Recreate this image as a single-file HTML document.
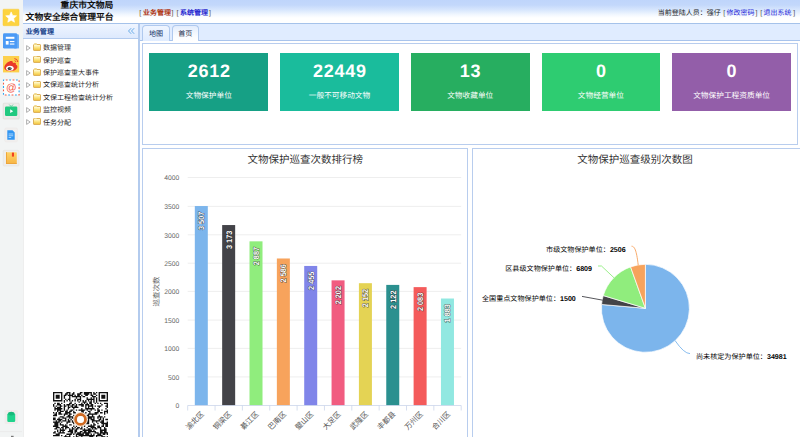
<!DOCTYPE html>
<html lang="zh-CN"><head><meta charset="utf-8">
<style>
*{margin:0;padding:0;box-sizing:border-box;text-rendering:geometricPrecision}
html,body{width:800px;height:437px;overflow:hidden;background:#fff;font-family:"Liberation Sans",sans-serif;position:relative}
.abs{position:absolute}
#strip{left:0;top:0;width:24px;height:437px;background:#f2f4f4;border-right:1px solid #eeeeee}
#hdr{left:23px;top:0;width:777px;height:23px;background:linear-gradient(to bottom,#bfd5fb 0%,#c3d8fb 22%,#dae8fd 45%,#f3f8ff 65%,#fff 78%,#fff 100%)}
#hdrline{left:23px;top:23px;width:777px;height:1px;background:#a5c2ea}
.t1{position:absolute;font-weight:bold;font-size:8.75px;line-height:9px;color:#111;white-space:nowrap}
.tx{position:absolute;font-size:7px;line-height:8px;white-space:nowrap;color:#333}
#wph{left:23px;top:24px;width:115px;height:14px;background:linear-gradient(to bottom,#eff5ff,#dde9fd)}
#wphline{left:23px;top:38px;width:115px;height:1px;background:#b3cbee}
#wbr{left:138px;top:24px;width:2px;height:413px;background:#b3cbee}
#tabs{left:140px;top:24px;width:660px;height:16px;background:#e0ecff}
#tabsline{left:140px;top:40px;width:660px;height:1px;background:#a9c4ec}
.tab{position:absolute;top:25px;height:16px;border:1px solid #b0c9ee;border-bottom:none;border-radius:4px 4px 0 0;background:linear-gradient(to bottom,#eff5ff,#e0ecff);font-size:7.1px;color:#0e2d5f;text-align:center;line-height:16px}
.tab.sel{background:linear-gradient(to bottom,#e3edfd,#fafcff 70%,#fff);height:16px;color:#1c2c4c}
.box{position:absolute;border:1px solid #b8cdee}
.card{position:absolute;top:52.8px;width:118.8px;height:58.2px;color:#fff;text-align:center}
.card .num{position:absolute;left:0;right:0;top:8.9px;font-weight:bold;font-size:18px;line-height:19px;letter-spacing:0.75px;text-indent:0.75px}
.card .lbl{position:absolute;left:0;right:0;top:38.2px;font-size:7.7px;line-height:9px}
.node{position:absolute;left:25px;height:12px;width:110px}
.hit{position:absolute;left:0.8px;top:3.3px;width:5px;height:6px}
.fold{position:absolute;left:7.8px;top:2.5px;width:8.2px;height:7px;border-radius:1px;background:linear-gradient(to bottom,#fffbd8,#fbe27a 55%,#f2c544);border:0.7px solid #deb25a}
.fold:before{content:"";position:absolute;left:0px;top:-1.6px;width:3.6px;height:1.6px;background:#f1d98c;border-radius:1px 1px 0 0}
.nt{position:absolute;left:17.9px;top:3.8px;font-size:7px;line-height:8px;color:#222;white-space:nowrap}
.ico{position:absolute;left:3px;width:16px;height:16px}
svg text{font-family:"Liberation Sans",sans-serif;text-rendering:geometricPrecision}
</style></head><body>
<div id="strip" class="abs"></div>
<div id="hdr" class="abs"></div>
<div id="hdrline" class="abs"></div>
<div class="t1" style="left:60.6px;top:1.3px;font-size:8.8px">重庆市文物局</div>
<div class="t1" style="left:25.6px;top:13.1px;font-size:8.8px">文物安全综合管理平台</div>
<div class="tx" style="left:139.3px;top:9.9px;color:#665544">[</div>
<div class="tx" style="left:143.1px;top:9.9px;color:#b23a17;font-weight:bold">业务管理</div>
<div class="tx" style="left:171.6px;top:9.9px;color:#665544">]</div>
<div class="tx" style="left:176.5px;top:9.9px;color:#665544">[</div>
<div class="tx" style="left:180px;top:9.9px;color:#2a2ad0;font-weight:bold">系统管理</div>
<div class="tx" style="left:209px;top:9.9px;color:#665544">]</div>
<div class="tx" style="left:657.8px;top:9.9px;color:#1a1a1a">当前登陆人员：强仔</div>
<div class="tx" style="left:723.2px;top:9.9px;color:#555">[</div>
<div class="tx" style="left:726.5px;top:9.9px;color:#2626d8">修改密码</div>
<div class="tx" style="left:755.4px;top:9.9px;color:#555">]</div>
<div class="tx" style="left:760.2px;top:9.9px;color:#555">[</div>
<div class="tx" style="left:763.4px;top:9.9px;color:#2626d8">退出系统</div>
<div class="tx" style="left:793.2px;top:9.9px;color:#555">]</div>

<div id="wph" class="abs"></div>
<div id="wphline" class="abs"></div>
<div class="tx" style="left:25.7px;top:28px;font-weight:bold;color:#15428b;font-size:7.1px">业务管理</div>
<svg class="abs" style="left:0;top:0" width="150" height="45" viewBox="0 0 150 45"><path d="M131.2 28.2L128.5 31L131.2 33.8M134.2 28.2L131.5 31L134.2 33.8" fill="none" stroke="#62a8e6" stroke-width="0.95"/></svg>
<div id="wbr" class="abs"></div>
<div class="node" style="top:41.5px"><svg class="hit" viewBox="0 0 5 6"><path d="M0.6 0.6L4.2 3L0.6 5.4Z" fill="#fff" stroke="#a8a8a8" stroke-width="0.9" stroke-linejoin="round"/></svg><span class="fold"></span><span class="nt">数据管理</span></div>
<div class="node" style="top:53.9px"><svg class="hit" viewBox="0 0 5 6"><path d="M0.6 0.6L4.2 3L0.6 5.4Z" fill="#fff" stroke="#a8a8a8" stroke-width="0.9" stroke-linejoin="round"/></svg><span class="fold"></span><span class="nt">保护巡查</span></div>
<div class="node" style="top:66.3px"><svg class="hit" viewBox="0 0 5 6"><path d="M0.6 0.6L4.2 3L0.6 5.4Z" fill="#fff" stroke="#a8a8a8" stroke-width="0.9" stroke-linejoin="round"/></svg><span class="fold"></span><span class="nt">保护巡查重大事件</span></div>
<div class="node" style="top:78.7px"><svg class="hit" viewBox="0 0 5 6"><path d="M0.6 0.6L4.2 3L0.6 5.4Z" fill="#fff" stroke="#a8a8a8" stroke-width="0.9" stroke-linejoin="round"/></svg><span class="fold"></span><span class="nt">文保巡查统计分析</span></div>
<div class="node" style="top:91.1px"><svg class="hit" viewBox="0 0 5 6"><path d="M0.6 0.6L4.2 3L0.6 5.4Z" fill="#fff" stroke="#a8a8a8" stroke-width="0.9" stroke-linejoin="round"/></svg><span class="fold"></span><span class="nt">文保工程检查统计分析</span></div>
<div class="node" style="top:103.5px"><svg class="hit" viewBox="0 0 5 6"><path d="M0.6 0.6L4.2 3L0.6 5.4Z" fill="#fff" stroke="#a8a8a8" stroke-width="0.9" stroke-linejoin="round"/></svg><span class="fold"></span><span class="nt">监控视频</span></div>
<div class="node" style="top:115.9px"><svg class="hit" viewBox="0 0 5 6"><path d="M0.6 0.6L4.2 3L0.6 5.4Z" fill="#fff" stroke="#a8a8a8" stroke-width="0.9" stroke-linejoin="round"/></svg><span class="fold"></span><span class="nt">任务分配</span></div>


<div id="tabs" class="abs"></div>
<div id="tabsline" class="abs"></div>
<div class="tab" style="left:142.4px;width:27.2px">地图</div>
<div class="tab sel" style="left:171.8px;width:27px">首页</div>

<div class="box" style="left:142px;top:43px;width:656px;height:102px"></div>
<div class="card" style="left:149.4px;background:#16a085"><div class="num">2612</div><div class="lbl">文物保护单位</div></div>
<div class="card" style="left:280.1px;background:#1abc9c"><div class="num">22449</div><div class="lbl">一般不可移动文物</div></div>
<div class="card" style="left:410.8px;background:#27ae60"><div class="num">13</div><div class="lbl">文物收藏单位</div></div>
<div class="card" style="left:541.5px;background:#2ecc71"><div class="num">0</div><div class="lbl">文物经营单位</div></div>
<div class="card" style="left:672.2px;background:#935ea9"><div class="num">0</div><div class="lbl">文物保护工程资质单位</div></div>

<div class="box" style="left:142px;top:148px;width:326px;height:300px"></div>
<div class="box" style="left:472px;top:148px;width:340px;height:300px;border-right:none"></div>

<svg class="abs" style="left:0;top:0" width="800" height="437" viewBox="0 0 800 437">
<text x="179.3" y="408.20" text-anchor="end" font-size="6.75" fill="#666">0</text>
<line x1="187.7" y1="376.90" x2="461.2" y2="376.90" stroke="#e6e6e6" stroke-width="0.7"/>
<text x="179.3" y="379.70" text-anchor="end" font-size="6.75" fill="#666">500</text>
<line x1="187.7" y1="348.40" x2="461.2" y2="348.40" stroke="#e6e6e6" stroke-width="0.7"/>
<text x="179.3" y="351.20" text-anchor="end" font-size="6.75" fill="#666">1000</text>
<line x1="187.7" y1="320.10" x2="461.2" y2="320.10" stroke="#e6e6e6" stroke-width="0.7"/>
<text x="179.3" y="322.90" text-anchor="end" font-size="6.75" fill="#666">1500</text>
<line x1="187.7" y1="291.40" x2="461.2" y2="291.40" stroke="#e6e6e6" stroke-width="0.7"/>
<text x="179.3" y="294.20" text-anchor="end" font-size="6.75" fill="#666">2000</text>
<line x1="187.7" y1="263.20" x2="461.2" y2="263.20" stroke="#e6e6e6" stroke-width="0.7"/>
<text x="179.3" y="266.00" text-anchor="end" font-size="6.75" fill="#666">2500</text>
<line x1="187.7" y1="234.80" x2="461.2" y2="234.80" stroke="#e6e6e6" stroke-width="0.7"/>
<text x="179.3" y="237.60" text-anchor="end" font-size="6.75" fill="#666">3000</text>
<line x1="187.7" y1="206.40" x2="461.2" y2="206.40" stroke="#e6e6e6" stroke-width="0.7"/>
<text x="179.3" y="209.20" text-anchor="end" font-size="6.75" fill="#666">3500</text>
<line x1="187.7" y1="177.50" x2="461.2" y2="177.50" stroke="#e6e6e6" stroke-width="0.7"/>
<text x="179.3" y="180.30" text-anchor="end" font-size="6.75" fill="#666">4000</text>
<rect x="194.81" y="206.03" width="13.0" height="199.47" fill="#7cb5ec"/>
<text transform="translate(204.21,211.63) rotate(-90)" text-anchor="end" font-size="8" font-weight="bold" textLength="18.4" lengthAdjust="spacingAndGlyphs" fill="#fff" stroke="#222" stroke-width="1.0" stroke-opacity="0.7" paint-order="stroke">3 507</text>
<rect x="222.16" y="225.05" width="13.0" height="180.45" fill="#434348"/>
<text transform="translate(231.56,230.65) rotate(-90)" text-anchor="end" font-size="8" font-weight="bold" textLength="18.4" lengthAdjust="spacingAndGlyphs" fill="#fff" stroke="#222" stroke-width="1.0" stroke-opacity="0.7" paint-order="stroke">3 173</text>
<rect x="249.51" y="241.34" width="13.0" height="164.16" fill="#90ed7d"/>
<text transform="translate(258.91,246.94) rotate(-90)" text-anchor="end" font-size="8" font-weight="bold" textLength="18.4" lengthAdjust="spacingAndGlyphs" fill="#fff" stroke="#222" stroke-width="1.0" stroke-opacity="0.7" paint-order="stroke">2 887</text>
<rect x="276.86" y="258.48" width="13.0" height="147.02" fill="#f7a35c"/>
<text transform="translate(286.26,264.08) rotate(-90)" text-anchor="end" font-size="8" font-weight="bold" textLength="18.4" lengthAdjust="spacingAndGlyphs" fill="#fff" stroke="#222" stroke-width="1.0" stroke-opacity="0.7" paint-order="stroke">2 586</text>
<rect x="304.21" y="265.94" width="13.0" height="139.56" fill="#8085e9"/>
<text transform="translate(313.61,271.54) rotate(-90)" text-anchor="end" font-size="8" font-weight="bold" textLength="18.4" lengthAdjust="spacingAndGlyphs" fill="#fff" stroke="#222" stroke-width="1.0" stroke-opacity="0.7" paint-order="stroke">2 455</text>
<rect x="331.56" y="280.35" width="13.0" height="125.15" fill="#f15c80"/>
<text transform="translate(340.96,285.95) rotate(-90)" text-anchor="end" font-size="8" font-weight="bold" textLength="18.4" lengthAdjust="spacingAndGlyphs" fill="#fff" stroke="#222" stroke-width="1.0" stroke-opacity="0.7" paint-order="stroke">2 202</text>
<rect x="358.91" y="283.19" width="13.0" height="122.31" fill="#e4d354"/>
<text transform="translate(368.31,288.79) rotate(-90)" text-anchor="end" font-size="8" font-weight="bold" textLength="18.4" lengthAdjust="spacingAndGlyphs" fill="#fff" stroke="#222" stroke-width="1.0" stroke-opacity="0.7" paint-order="stroke">2 152</text>
<rect x="386.26" y="284.90" width="13.0" height="120.60" fill="#2b908f"/>
<text transform="translate(395.66,290.50) rotate(-90)" text-anchor="end" font-size="8" font-weight="bold" textLength="18.4" lengthAdjust="spacingAndGlyphs" fill="#fff" stroke="#222" stroke-width="1.0" stroke-opacity="0.7" paint-order="stroke">2 122</text>
<rect x="413.61" y="287.12" width="13.0" height="118.38" fill="#f45b5b"/>
<text transform="translate(423.01,292.72) rotate(-90)" text-anchor="end" font-size="8" font-weight="bold" textLength="18.4" lengthAdjust="spacingAndGlyphs" fill="#fff" stroke="#222" stroke-width="1.0" stroke-opacity="0.7" paint-order="stroke">2 083</text>
<rect x="440.96" y="298.51" width="13.0" height="106.99" fill="#91e8e1"/>
<text transform="translate(450.36,304.11) rotate(-90)" text-anchor="end" font-size="8" font-weight="bold" textLength="18.4" lengthAdjust="spacingAndGlyphs" fill="#fff" stroke="#222" stroke-width="1.0" stroke-opacity="0.7" paint-order="stroke">1 883</text>
<line x1="187.7" y1="405.5" x2="461.2" y2="405.5" stroke="#ccd6eb" stroke-width="0.8"/>
<line x1="187.70" y1="405.5" x2="187.70" y2="410.5" stroke="#ccd6eb" stroke-width="0.8"/>
<line x1="215.05" y1="405.5" x2="215.05" y2="410.5" stroke="#ccd6eb" stroke-width="0.8"/>
<line x1="242.40" y1="405.5" x2="242.40" y2="410.5" stroke="#ccd6eb" stroke-width="0.8"/>
<line x1="269.75" y1="405.5" x2="269.75" y2="410.5" stroke="#ccd6eb" stroke-width="0.8"/>
<line x1="297.10" y1="405.5" x2="297.10" y2="410.5" stroke="#ccd6eb" stroke-width="0.8"/>
<line x1="324.45" y1="405.5" x2="324.45" y2="410.5" stroke="#ccd6eb" stroke-width="0.8"/>
<line x1="351.80" y1="405.5" x2="351.80" y2="410.5" stroke="#ccd6eb" stroke-width="0.8"/>
<line x1="379.15" y1="405.5" x2="379.15" y2="410.5" stroke="#ccd6eb" stroke-width="0.8"/>
<line x1="406.50" y1="405.5" x2="406.50" y2="410.5" stroke="#ccd6eb" stroke-width="0.8"/>
<line x1="433.85" y1="405.5" x2="433.85" y2="410.5" stroke="#ccd6eb" stroke-width="0.8"/>
<line x1="461.20" y1="405.5" x2="461.20" y2="410.5" stroke="#ccd6eb" stroke-width="0.8"/>
<text transform="translate(204.57,414.6) rotate(-45)" text-anchor="end" font-size="7.4" fill="#555">渝北区</text>
<text transform="translate(231.92,414.6) rotate(-45)" text-anchor="end" font-size="7.4" fill="#555">铜梁区</text>
<text transform="translate(259.27,414.6) rotate(-45)" text-anchor="end" font-size="7.4" fill="#555">綦江区</text>
<text transform="translate(286.62,414.6) rotate(-45)" text-anchor="end" font-size="7.4" fill="#555">巴南区</text>
<text transform="translate(313.97,414.6) rotate(-45)" text-anchor="end" font-size="7.4" fill="#555">璧山区</text>
<text transform="translate(341.32,414.6) rotate(-45)" text-anchor="end" font-size="7.4" fill="#555">大足区</text>
<text transform="translate(368.68,414.6) rotate(-45)" text-anchor="end" font-size="7.4" fill="#555">武隆区</text>
<text transform="translate(396.02,414.6) rotate(-45)" text-anchor="end" font-size="7.4" fill="#555">丰都县</text>
<text transform="translate(423.38,414.6) rotate(-45)" text-anchor="end" font-size="7.4" fill="#555">万州区</text>
<text transform="translate(450.72,414.6) rotate(-45)" text-anchor="end" font-size="7.4" fill="#555">合川区</text>
<text transform="translate(158.6,291.4) rotate(-90)" text-anchor="middle" font-size="7.5" fill="#666">巡查次数</text>
<text x="305.3" y="162.6" text-anchor="middle" font-size="10.5" fill="#333">文物保护巡查次数排行榜</text>
<path d="M645.4 308.3L645.40 264.30A44 44 0 1 1 601.57 304.48Z" fill="#7cb5ec" stroke="#fff" stroke-width="0.7" stroke-linejoin="round"/>
<path d="M645.4 308.3L601.57 304.48A44 44 0 0 1 603.27 295.60Z" fill="#434348" stroke="#fff" stroke-width="0.7" stroke-linejoin="round"/>
<path d="M645.4 308.3L603.27 295.60A44 44 0 0 1 630.57 266.88Z" fill="#90ed7d" stroke="#fff" stroke-width="0.7" stroke-linejoin="round"/>
<path d="M645.4 308.3L630.57 266.88A44 44 0 0 1 645.40 264.30Z" fill="#f7a35c" stroke="#fff" stroke-width="0.7" stroke-linejoin="round"/>
<path d="M631.5 246.2C634.5 246.2 636.5 250 638.2 265" fill="none" stroke="#f7a35c" stroke-width="0.9"/>
<path d="M598 266L601.5 266L614 277.8" fill="none" stroke="#90ed7d" stroke-width="0.9"/>
<path d="M582 296.4L602.8 300.2" fill="none" stroke="#434348" stroke-width="0.9"/>
<path d="M675 340.5Q684 353.6 690 353.6" fill="none" stroke="#7cb5ec" stroke-width="0.9"/>
<text x="625.7" y="251.8" text-anchor="end" font-size="7.1" fill="#000">市级文物保护单位：<tspan font-weight="bold">2506</tspan></text>
<text x="592" y="270.9" text-anchor="end" font-size="7.1" fill="#000">区县级文物保护单位：<tspan font-weight="bold">6809</tspan></text>
<text x="575.8" y="301.0" text-anchor="end" font-size="7.1" fill="#000">全国重点文物保护单位：<tspan font-weight="bold">1500</tspan></text>
<text x="696" y="359.2" text-anchor="start" font-size="7.1" fill="#000">尚未核定为保护单位：<tspan font-weight="bold">34981</tspan></text>
<text x="635" y="162.6" text-anchor="middle" font-size="10.5" fill="#333">文物保护巡查级别次数图</text>
<g transform="translate(53,392) scale(1.3415)"><path d="M0 0h7v1h-7zM10 0h3v1h-3zM15 0h1v1h-1zM20 0h2v1h-2zM23 0h6v1h-6zM30 0h1v1h-1zM32 0h1v1h-1zM34 0h7v1h-7zM0 1h1v1h-1zM6 1h1v1h-1zM9 1h2v1h-2zM12 1h1v1h-1zM14 1h2v1h-2zM18 1h3v1h-3zM23 1h4v1h-4zM28 1h1v1h-1zM30 1h2v1h-2zM34 1h1v1h-1zM40 1h1v1h-1zM0 2h1v1h-1zM2 2h3v1h-3zM6 2h1v1h-1zM8 2h2v1h-2zM11 2h4v1h-4zM16 2h1v1h-1zM18 2h2v1h-2zM21 2h1v1h-1zM24 2h2v1h-2zM28 2h2v1h-2zM32 2h1v1h-1zM34 2h1v1h-1zM36 2h3v1h-3zM40 2h1v1h-1zM0 3h1v1h-1zM2 3h3v1h-3zM6 3h1v1h-1zM8 3h1v1h-1zM12 3h1v1h-1zM14 3h7v1h-7zM22 3h2v1h-2zM29 3h3v1h-3zM34 3h1v1h-1zM36 3h3v1h-3zM40 3h1v1h-1zM0 4h1v1h-1zM2 4h3v1h-3zM6 4h1v1h-1zM8 4h1v1h-1zM12 4h1v1h-1zM17 4h1v1h-1zM20 4h1v1h-1zM25 4h1v1h-1zM28 4h1v1h-1zM30 4h1v1h-1zM32 4h1v1h-1zM34 4h1v1h-1zM36 4h3v1h-3zM40 4h1v1h-1zM0 5h1v1h-1zM6 5h1v1h-1zM9 5h1v1h-1zM11 5h2v1h-2zM16 5h1v1h-1zM18 5h3v1h-3zM25 5h6v1h-6zM32 5h1v1h-1zM34 5h1v1h-1zM40 5h1v1h-1zM0 6h7v1h-7zM8 6h1v1h-1zM10 6h1v1h-1zM12 6h1v1h-1zM14 6h1v1h-1zM16 6h1v1h-1zM18 6h1v1h-1zM20 6h1v1h-1zM22 6h1v1h-1zM24 6h1v1h-1zM26 6h1v1h-1zM28 6h1v1h-1zM30 6h1v1h-1zM32 6h1v1h-1zM34 6h7v1h-7zM8 7h1v1h-1zM13 7h1v1h-1zM19 7h1v1h-1zM22 7h3v1h-3zM27 7h2v1h-2zM30 7h1v1h-1zM32 7h1v1h-1zM1 8h1v1h-1zM3 8h2v1h-2zM6 8h1v1h-1zM12 8h2v1h-2zM16 8h1v1h-1zM21 8h1v1h-1zM23 8h1v1h-1zM25 8h1v1h-1zM27 8h2v1h-2zM31 8h1v1h-1zM33 8h1v1h-1zM35 8h1v1h-1zM38 8h3v1h-3zM0 9h1v1h-1zM3 9h3v1h-3zM8 9h1v1h-1zM10 9h3v1h-3zM14 9h2v1h-2zM17 9h1v1h-1zM19 9h4v1h-4zM24 9h3v1h-3zM28 9h2v1h-2zM36 9h1v1h-1zM40 9h1v1h-1zM0 10h1v1h-1zM2 10h1v1h-1zM5 10h2v1h-2zM8 10h2v1h-2zM11 10h1v1h-1zM13 10h2v1h-2zM16 10h2v1h-2zM21 10h2v1h-2zM24 10h1v1h-1zM26 10h4v1h-4zM31 10h1v1h-1zM33 10h3v1h-3zM39 10h2v1h-2zM1 11h1v1h-1zM3 11h3v1h-3zM8 11h1v1h-1zM11 11h2v1h-2zM14 11h5v1h-5zM24 11h1v1h-1zM26 11h1v1h-1zM29 11h1v1h-1zM34 11h1v1h-1zM40 11h1v1h-1zM1 12h6v1h-6zM8 12h1v1h-1zM11 12h1v1h-1zM15 12h1v1h-1zM21 12h1v1h-1zM24 12h7v1h-7zM33 12h1v1h-1zM39 12h1v1h-1zM1 13h1v1h-1zM3 13h3v1h-3zM8 13h1v1h-1zM10 13h1v1h-1zM13 13h2v1h-2zM17 13h1v1h-1zM19 13h5v1h-5zM25 13h1v1h-1zM28 13h1v1h-1zM31 13h1v1h-1zM33 13h2v1h-2zM36 13h1v1h-1zM40 13h1v1h-1zM3 14h1v1h-1zM5 14h3v1h-3zM9 14h2v1h-2zM12 14h2v1h-2zM15 14h1v1h-1zM21 14h2v1h-2zM26 14h2v1h-2zM33 14h2v1h-2zM38 14h3v1h-3zM0 15h1v1h-1zM2 15h1v1h-1zM4 15h2v1h-2zM9 15h4v1h-4zM15 15h2v1h-2zM20 15h3v1h-3zM24 15h1v1h-1zM27 15h1v1h-1zM31 15h3v1h-3zM35 15h2v1h-2zM38 15h1v1h-1zM40 15h1v1h-1zM1 16h2v1h-2zM4 16h3v1h-3zM8 16h3v1h-3zM12 16h2v1h-2zM19 16h1v1h-1zM21 16h3v1h-3zM26 16h7v1h-7zM38 16h1v1h-1zM0 17h3v1h-3zM8 17h1v1h-1zM11 17h2v1h-2zM15 17h1v1h-1zM17 17h1v1h-1zM20 17h2v1h-2zM25 17h2v1h-2zM29 17h1v1h-1zM34 17h1v1h-1zM5 18h3v1h-3zM10 18h5v1h-5zM16 18h3v1h-3zM21 18h3v1h-3zM26 18h5v1h-5zM33 18h4v1h-4zM38 18h1v1h-1zM0 19h2v1h-2zM4 19h1v1h-1zM7 19h3v1h-3zM12 19h1v1h-1zM14 19h2v1h-2zM18 19h4v1h-4zM25 19h4v1h-4zM30 19h1v1h-1zM33 19h1v1h-1zM35 19h1v1h-1zM37 19h1v1h-1zM0 20h2v1h-2zM3 20h4v1h-4zM9 20h1v1h-1zM11 20h1v1h-1zM13 20h1v1h-1zM15 20h1v1h-1zM18 20h1v1h-1zM20 20h5v1h-5zM26 20h1v1h-1zM28 20h3v1h-3zM34 20h2v1h-2zM37 20h1v1h-1zM39 20h2v1h-2zM2 21h1v1h-1zM4 21h2v1h-2zM7 21h3v1h-3zM11 21h2v1h-2zM14 21h1v1h-1zM18 21h1v1h-1zM20 21h3v1h-3zM25 21h2v1h-2zM29 21h6v1h-6zM36 21h2v1h-2zM0 22h5v1h-5zM6 22h1v1h-1zM10 22h3v1h-3zM14 22h3v1h-3zM20 22h1v1h-1zM24 22h3v1h-3zM29 22h1v1h-1zM32 22h1v1h-1zM35 22h3v1h-3zM40 22h1v1h-1zM1 23h3v1h-3zM5 23h1v1h-1zM10 23h1v1h-1zM15 23h1v1h-1zM17 23h1v1h-1zM19 23h1v1h-1zM22 23h1v1h-1zM24 23h3v1h-3zM30 23h1v1h-1zM33 23h1v1h-1zM36 23h5v1h-5zM1 24h3v1h-3zM5 24h3v1h-3zM9 24h1v1h-1zM12 24h2v1h-2zM18 24h1v1h-1zM22 24h2v1h-2zM28 24h1v1h-1zM30 24h2v1h-2zM37 24h1v1h-1zM39 24h2v1h-2zM0 25h4v1h-4zM7 25h4v1h-4zM15 25h1v1h-1zM17 25h1v1h-1zM21 25h1v1h-1zM23 25h1v1h-1zM26 25h5v1h-5zM33 25h2v1h-2zM36 25h2v1h-2zM39 25h2v1h-2zM2 26h3v1h-3zM6 26h2v1h-2zM9 26h3v1h-3zM14 26h1v1h-1zM16 26h1v1h-1zM18 26h2v1h-2zM21 26h1v1h-1zM25 26h1v1h-1zM28 26h4v1h-4zM33 26h3v1h-3zM38 26h1v1h-1zM1 27h2v1h-2zM5 27h1v1h-1zM7 27h1v1h-1zM9 27h1v1h-1zM12 27h1v1h-1zM14 27h2v1h-2zM17 27h2v1h-2zM20 27h2v1h-2zM23 27h1v1h-1zM26 27h2v1h-2zM29 27h1v1h-1zM31 27h2v1h-2zM35 27h1v1h-1zM38 27h2v1h-2zM3 28h1v1h-1zM5 28h4v1h-4zM12 28h3v1h-3zM16 28h2v1h-2zM22 28h7v1h-7zM30 28h1v1h-1zM35 28h5v1h-5zM1 29h1v1h-1zM3 29h1v1h-1zM5 29h1v1h-1zM7 29h1v1h-1zM11 29h4v1h-4zM16 29h2v1h-2zM20 29h2v1h-2zM23 29h2v1h-2zM26 29h6v1h-6zM35 29h2v1h-2zM38 29h2v1h-2zM0 30h2v1h-2zM4 30h5v1h-5zM13 30h2v1h-2zM16 30h1v1h-1zM18 30h3v1h-3zM22 30h6v1h-6zM31 30h3v1h-3zM35 30h6v1h-6zM2 31h3v1h-3zM10 31h4v1h-4zM15 31h1v1h-1zM17 31h6v1h-6zM24 31h3v1h-3zM28 31h1v1h-1zM30 31h1v1h-1zM33 31h3v1h-3zM37 31h2v1h-2zM40 31h1v1h-1zM0 32h5v1h-5zM6 32h1v1h-1zM9 32h1v1h-1zM12 32h1v1h-1zM17 32h1v1h-1zM19 32h12v1h-12zM32 32h5v1h-5zM8 33h5v1h-5zM15 33h1v1h-1zM17 33h2v1h-2zM21 33h1v1h-1zM27 33h3v1h-3zM32 33h1v1h-1zM36 33h3v1h-3zM40 33h1v1h-1zM0 34h7v1h-7zM8 34h1v1h-1zM15 34h2v1h-2zM18 34h1v1h-1zM24 34h1v1h-1zM26 34h1v1h-1zM28 34h2v1h-2zM32 34h1v1h-1zM34 34h1v1h-1zM36 34h5v1h-5zM0 35h1v1h-1zM6 35h1v1h-1zM8 35h3v1h-3zM12 35h1v1h-1zM14 35h1v1h-1zM16 35h2v1h-2zM22 35h1v1h-1zM27 35h2v1h-2zM30 35h3v1h-3zM36 35h1v1h-1zM38 35h1v1h-1zM40 35h1v1h-1zM0 36h1v1h-1zM2 36h3v1h-3zM6 36h1v1h-1zM9 36h3v1h-3zM13 36h3v1h-3zM18 36h2v1h-2zM23 36h1v1h-1zM27 36h3v1h-3zM31 36h7v1h-7zM39 36h2v1h-2zM0 37h1v1h-1zM2 37h3v1h-3zM6 37h1v1h-1zM8 37h2v1h-2zM11 37h1v1h-1zM13 37h2v1h-2zM16 37h2v1h-2zM21 37h1v1h-1zM25 37h1v1h-1zM28 37h6v1h-6zM35 37h4v1h-4zM40 37h1v1h-1zM0 38h1v1h-1zM2 38h3v1h-3zM6 38h1v1h-1zM9 38h1v1h-1zM11 38h1v1h-1zM13 38h1v1h-1zM15 38h1v1h-1zM17 38h3v1h-3zM22 38h1v1h-1zM24 38h2v1h-2zM27 38h3v1h-3zM31 38h1v1h-1zM35 38h6v1h-6zM0 39h1v1h-1zM6 39h1v1h-1zM9 39h1v1h-1zM11 39h1v1h-1zM13 39h2v1h-2zM16 39h2v1h-2zM20 39h3v1h-3zM24 39h1v1h-1zM26 39h1v1h-1zM28 39h1v1h-1zM33 39h1v1h-1zM35 39h1v1h-1zM38 39h1v1h-1zM40 39h1v1h-1zM0 40h7v1h-7zM11 40h2v1h-2zM15 40h1v1h-1zM18 40h1v1h-1zM20 40h1v1h-1zM22 40h2v1h-2zM29 40h1v1h-1zM31 40h1v1h-1zM34 40h1v1h-1zM36 40h1v1h-1zM39 40h2v1h-2z" fill="#111"/></g>
<circle cx="80.5" cy="419.4" r="7.4" fill="#f4e6d8"/>
<circle cx="80.5" cy="419.4" r="4.9" fill="none" stroke="#d06a22" stroke-width="2.8"/>
<circle cx="80.5" cy="419.4" r="3.4" fill="#fff"/>
</svg>

<!-- left strip icons -->
<svg class="abs" style="left:0;top:0" width="23" height="437" viewBox="0 0 23 437">
 <rect x="3" y="9.2" width="16" height="16.5" rx="0.8" fill="#fdd33f" stroke="#f8c935" stroke-width="0.5"/>
 <path d="M11.15 11.90L12.72 15.43L16.57 15.84L13.70 18.43L14.50 22.21L11.15 20.28L7.80 22.21L8.60 18.43L5.73 15.84L9.58 15.43Z" fill="#fff" stroke="#fff" stroke-width="0.6" stroke-linejoin="round"/>
 <rect x="14" y="34.2" width="5" height="14.4" rx="1.2" fill="#6aaef7"/>
 <rect x="3" y="33.2" width="14.2" height="15.4" rx="1.4" fill="#4b9af5"/>
 <rect x="5.8" y="36.8" width="8.6" height="2" fill="#fff"/>
 <rect x="5.8" y="41" width="2.8" height="3.6" fill="#fff"/>
 <rect x="9.8" y="41" width="4.6" height="1.1" fill="#fff"/>
 <rect x="9.8" y="43.5" width="4.6" height="1.1" fill="#fff"/>
 <rect x="3" y="56" width="16.2" height="16.4" fill="#fdd04b"/>
 <path d="M4.3 67.8c0-2.6 2.6-5.4 5.6-6.5 2.2-.8 3.4 0 2.9 1.8 2-.7 3.6-.3 3.1 1.6 1 .4 1.5 1.1 1.5 2.1 0 2.5-3.5 4.4-6.8 4.4-3.4 0-6.3-1.2-6.3-3.4z" fill="#ea3a2a"/>
 <ellipse cx="9.9" cy="68.2" rx="3.8" ry="2.5" fill="#fff"/>
 <ellipse cx="9.6" cy="68.4" rx="2" ry="1.5" fill="#3a3a3a"/>
 <circle cx="10.1" cy="68" r="0.5" fill="#fff"/>
 <path d="M14.4 58.6a3.6 3.6 0 0 1 3.4 3.4M14.6 60.6a1.6 1.6 0 0 1 1.3 1.3" fill="none" stroke="#ea3a2a" stroke-width="0.9"/>
 <rect x="3.5" y="80" width="15.6" height="15" fill="#fff"/>
 <rect x="3.5" y="80" width="15.6" height="15" fill="none" stroke="#f25a45" stroke-width="1.1" stroke-dasharray="1.8 5" stroke-dashoffset="-2.3"/>
 <rect x="3.5" y="80" width="15.6" height="15" fill="none" stroke="#2ea6f0" stroke-width="1.1" stroke-dasharray="1.8 5" stroke-dashoffset="1.1"/>
 <text x="11.3" y="90.6" text-anchor="middle" font-size="10.5" fill="#f2553f" font-family="Liberation Sans">@</text>
 <rect x="3.2" y="103.2" width="16" height="15.8" rx="0.8" fill="#eeebe9" stroke="#dcd8d4" stroke-width="0.6"/>
 <rect x="5" y="106.6" width="12.3" height="9.4" rx="1.2" fill="#22c97f"/>
 <path d="M9.3 104.6L11.15 106.5L13 104.6" fill="none" stroke="#22c97f" stroke-width="0.7"/>
 <path d="M10.2 109.3l3 1.9-3 1.9z" fill="#fff"/>
 <rect x="4.8" y="128" width="12.6" height="13.8" rx="1.2" fill="#f1efee" stroke="#ebe7e4" stroke-width="0.5"/>
 <path d="M7.3 130.2h5.2l2.2 2.2v7.4H7.3z" fill="#3196f2"/>
 <rect x="8.6" y="133.6" width="4.6" height="0.8" fill="#bfe0ff"/><rect x="8.6" y="135.4" width="4.6" height="0.8" fill="#bfe0ff"/><rect x="8.6" y="137.2" width="2.6" height="0.8" fill="#bfe0ff"/>
 <defs><linearGradient id="bk" x1="0" y1="0" x2="0" y2="1"><stop offset="0" stop-color="#ffd46a"/><stop offset="1" stop-color="#f7b443"/></linearGradient></defs>
 <rect x="3.2" y="150.4" width="15.8" height="15.6" rx="1" fill="#efeeec" stroke="#e4e2df" stroke-width="0.6"/>
 <rect x="6" y="152.2" width="10.8" height="11.8" rx="0.8" fill="url(#bk)"/>
 <rect x="6" y="152.2" width="1" height="11.8" fill="#eea63a"/>
 <rect x="6" y="163.2" width="10.8" height="0.8" fill="#e9a23a"/>
 <rect x="11.9" y="152.6" width="2.1" height="4" fill="#f2401f"/>
 <rect x="4.5" y="410" width="13.5" height="14" rx="1.5" fill="#f1ecec"/>
 <rect x="7.3" y="413.4" width="7.9" height="8.5" rx="1.2" fill="#20d38c"/><ellipse cx="11.25" cy="413.6" rx="3.2" ry="1.9" fill="#18b97a"/>
 <rect x="0" y="431.2" width="22" height="0.9" fill="#eaeaea"/>
 <rect x="11" y="435.8" width="2.6" height="1.2" fill="#777"/>
</svg>
</body></html>
